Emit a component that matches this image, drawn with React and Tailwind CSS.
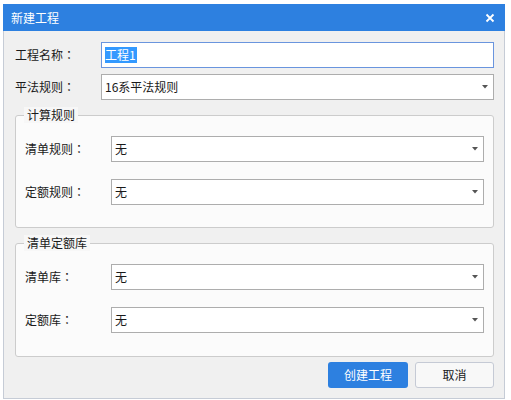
import React from "react";

const font = { fontFamily: '"Noto Sans CJK SC", "Noto Sans", sans-serif' };
const colonFont = { fontFamily: '"Noto Sans CJK TC", "Noto Sans CJK SC", sans-serif' };

const Arrow = () => (
  <svg width="6" height="4" viewBox="0 0 6 4" className="shrink-0">
    <path d="M0 0h6L3 3.5z" fill="#555" />
  </svg>
);

const SelectBox = ({ value }) => (
  <div className="flex-1 h-[26px] bg-white border border-[#adadad] flex items-center pl-[3px] pr-[5px] text-[12px] text-[#1a1a1a]">
    <span className="flex-1">{value}</span>
    <Arrow />
  </div>
);

const Row = ({ label, children }) => (
  <div className="flex items-center">
    <span className="w-[86px] shrink-0 text-[12px] text-[#1a1a1a]">
      {label}
      <span style={colonFont}>：</span>
    </span>
    {children}
  </div>
);

const Group = ({ title, children, pb }) => (
  <div className={`relative bg-[#fbfbfb] border border-[#cccccc] rounded-[3px] pl-[9px] pr-[9px] pt-[20px] ${pb} flex flex-col gap-[17px]`}>
    <span className="absolute left-[8px] top-[-9px] px-[3px] bg-[#f7f7f7] text-[12px] leading-[16px] text-[#1a1a1a]">
      {title}
    </span>
    {children}
  </div>
);

export default function App() {
  return (
    <div className="w-[511px] h-[400px] bg-white pt-[4px] pl-[3px]" style={font}>
      <div className="w-[502px] h-[395px] flex flex-col">
        <div className="h-[27px] bg-[#2d80e0] flex items-center justify-between pl-[8px] pr-[10px] shrink-0">
          <span className="text-white text-[12px]">新建工程</span>
          <svg width="10" height="10" viewBox="0 0 10 10">
            <path d="M1.5 1.5l7 7M8.5 1.5l-7 7" stroke="#fff" strokeWidth="1.8" />
          </svg>
        </div>
        <div className="flex-1 bg-[#f0f0f0] border-x border-b border-[#c6ccd6] pl-[11px] pr-[10px] pt-[11px] flex flex-col">
          <Row label="工程名称">
            <div className="flex-1 h-[26px] bg-white border border-[#6a95de] flex items-center pl-[3px]">
              <span className="bg-[#3399ff] text-white text-[12px] leading-[16px] pr-[1px]">工程1</span>
            </div>
          </Row>
          <div className="mt-[6px]">
            <Row label="平法规则">
              <SelectBox value="16系平法规则" />
            </Row>
          </div>
          <div className="mt-[15px]">
            <Group title="计算规则" pb="pb-[22px]">
              <Row label="清单规则">
                <SelectBox value="无" />
              </Row>
              <Row label="定额规则">
                <SelectBox value="无" />
              </Row>
            </Group>
          </div>
          <div className="mt-[15px]">
            <Group title="清单定额库" pb="pb-[23px]">
              <Row label="清单库">
                <SelectBox value="无" />
              </Row>
              <Row label="定额库">
                <SelectBox value="无" />
              </Row>
            </Group>
          </div>
          <div className="mt-[5px] flex justify-end gap-[7px]">
            <button className="w-[80px] h-[26px] bg-[#2d80e0] rounded-[3px] text-white text-[12px]">
              创建工程
            </button>
            <button className="w-[79px] h-[26px] bg-[#f8f8f8] border border-[#c5cad5] rounded-[3px] text-[#1a1a1a] text-[12px]">
              取消
            </button>
          </div>
        </div>
      </div>
    </div>
  );
}
